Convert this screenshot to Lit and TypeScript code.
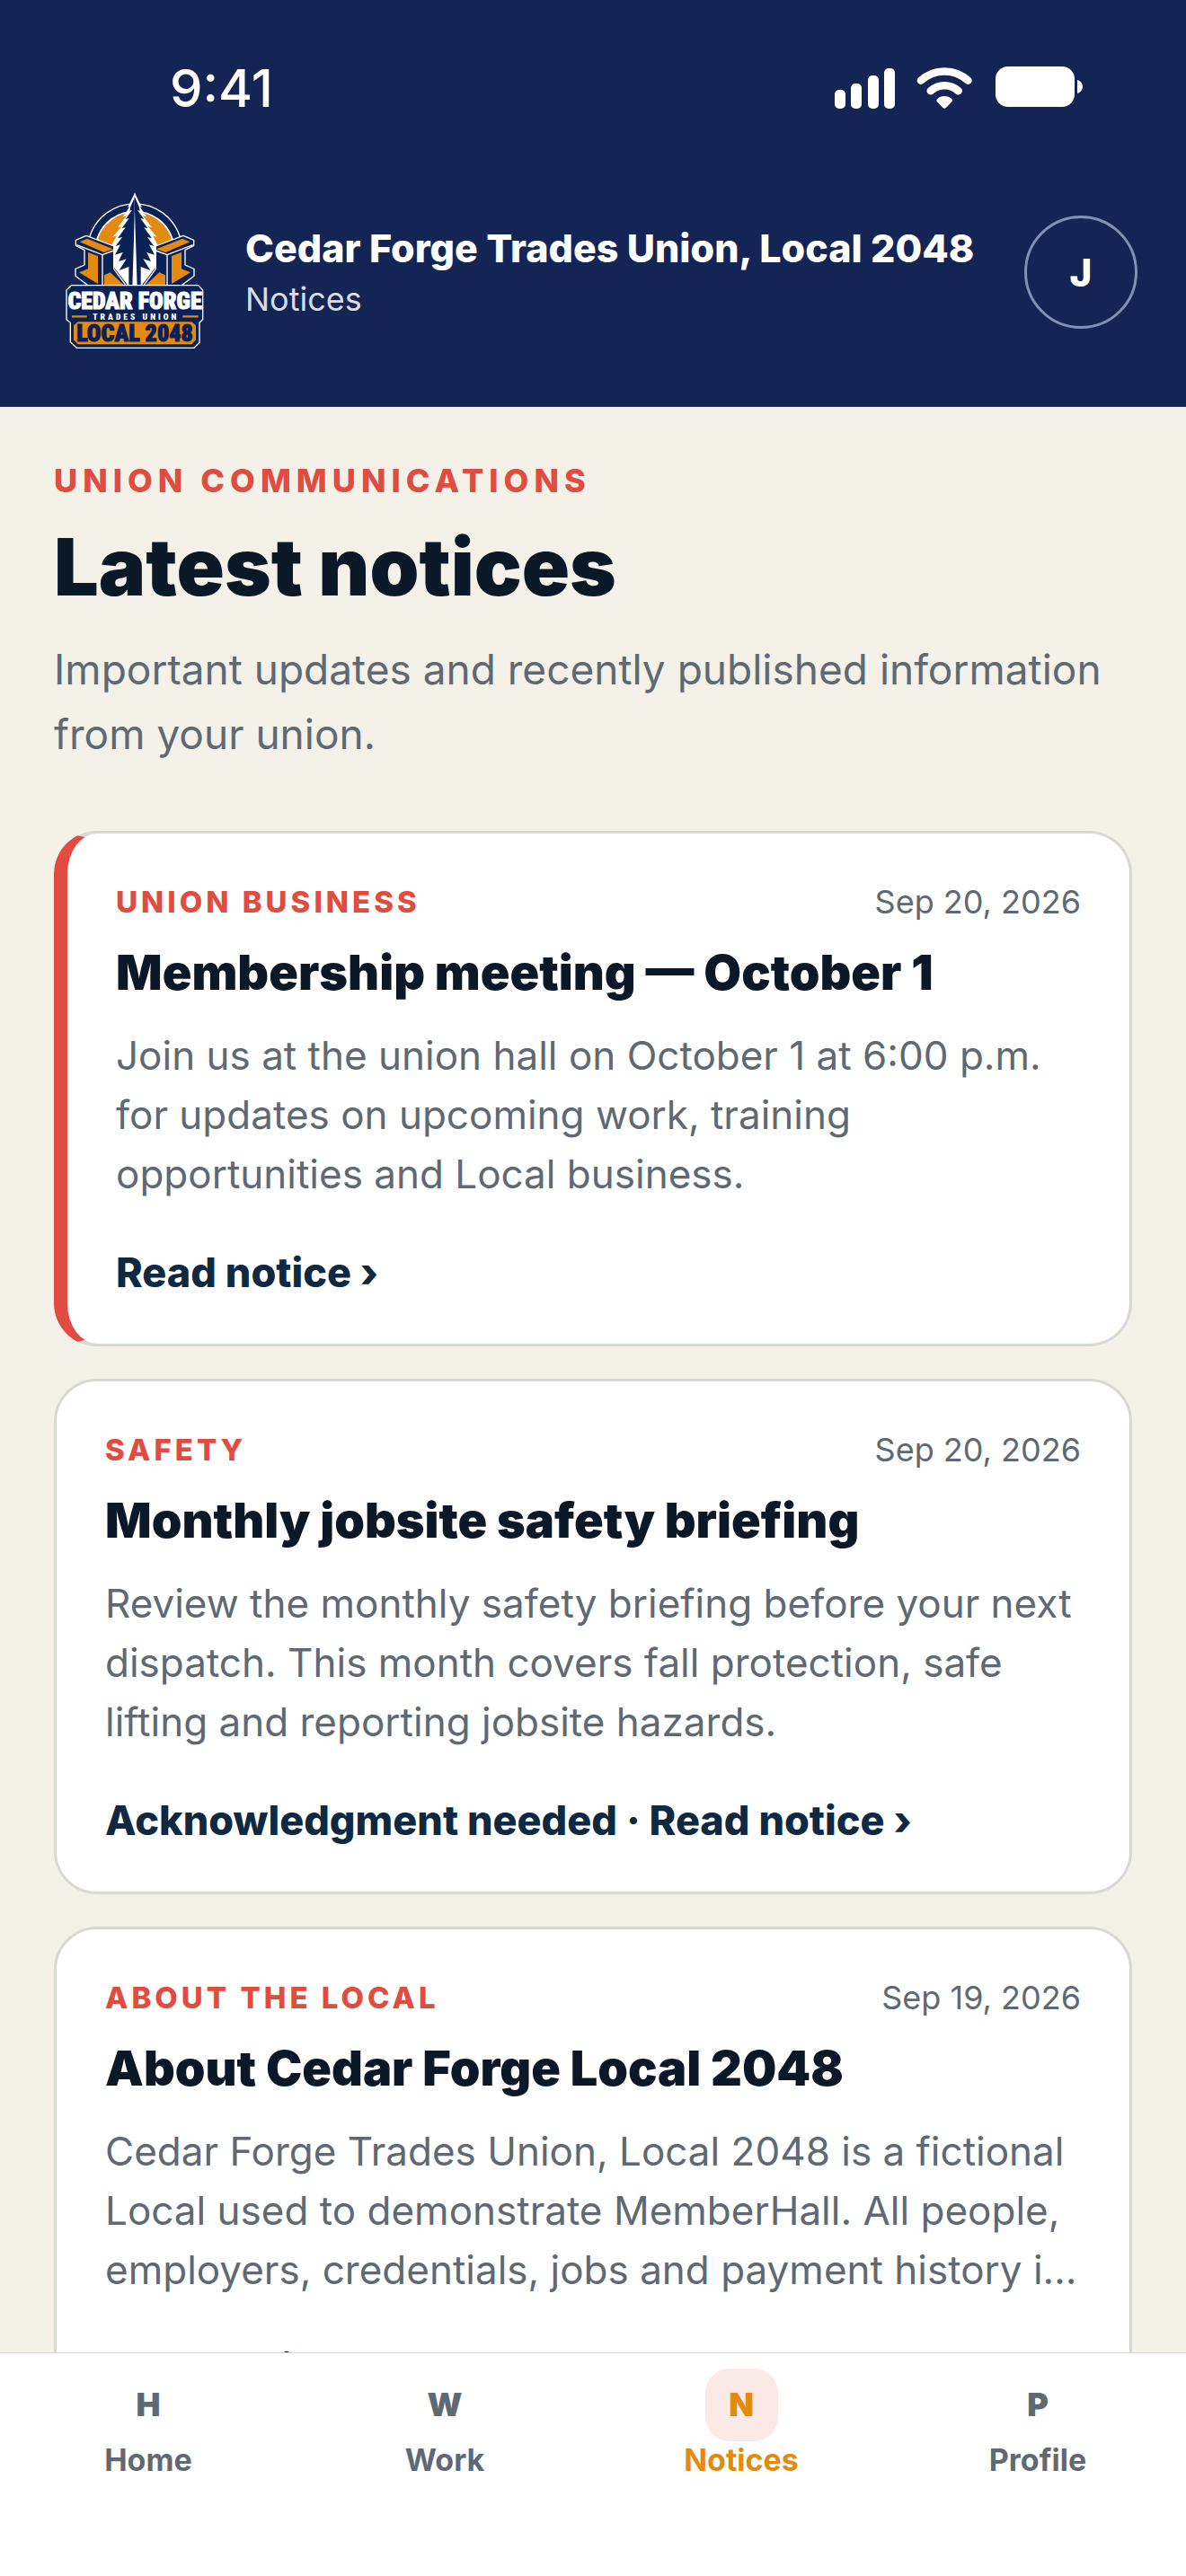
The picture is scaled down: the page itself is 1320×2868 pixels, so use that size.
import { LitElement, html, css, svg } from "lit";
import { customElement, property } from "lit/decorators.js";
import { classMap } from "lit/directives/class-map.js";

interface Notice {
  category: string;
  date: string;
  title: string;
  body: string;
  action: string;
  pinned?: boolean;
}

interface Tab {
  glyph: string;
  label: string;
  active?: boolean;
}

const NOTICES: Notice[] = [
  {
    category: "Union business",
    date: "Sep 20, 2026",
    title: "Membership meeting — October 1",
    body: "Join us at the union hall on October 1 at 6:00 p.m. for updates on upcoming work, training opportunities and Local business.",
    action: "Read notice ›",
    pinned: true,
  },
  {
    category: "Safety",
    date: "Sep 20, 2026",
    title: "Monthly jobsite safety briefing",
    body: "Review the monthly safety briefing before your next dispatch. This month covers fall protection, safe lifting and reporting jobsite hazards.",
    action: "Acknowledgment needed · Read notice ›",
  },
  {
    category: "About the Local",
    date: "Sep 19, 2026",
    title: "About Cedar Forge Local 2048",
    body: "Cedar Forge Trades Union, Local 2048 is a fictional Local used to demonstrate MemberHall. All people, employers, credentials, jobs and payment history in this app are fictional.",
    action: "Read notice ›",
  },
];

const TABS: Tab[] = [
  { glyph: "H", label: "Home" },
  { glyph: "W", label: "Work" },
  { glyph: "N", label: "Notices", active: true },
  { glyph: "P", label: "Profile" },
];

/**
 * Clock, signal, wifi and battery strip.
 */
@customElement("status-bar")
export class StatusBar extends LitElement {
  static styles = css`
    :host {
      align-items: center;
      color: #ffffff;
      display: flex;
      justify-content: space-between;
      padding: 62px 114px 60px 189px;
    }

    .clock {
      font-size: 58px;
      font-weight: 500;
      line-height: 72px;
    }

    .icons {
      display: block;
      height: 48px;
      width: 278px;
    }
  `;

  render() {
    return html`
      <span class="clock">9:41</span>
      <svg class="icons" viewBox="928 74 278 48" fill="#ffffff" aria-hidden="true">
        <rect x="929" y="100" width="12" height="21" rx="5"></rect>
        <rect x="947" y="93" width="12" height="28" rx="5"></rect>
        <rect x="966" y="84" width="12" height="37" rx="5"></rect>
        <rect x="984" y="76" width="12" height="45" rx="5"></rect>
        <g fill="none" stroke="#ffffff" stroke-width="8.6" stroke-linecap="round">
          <path d="M1025 89.700a38.600 38.600 0 0 1 52.400 0"></path>
          <path d="M1035.800 101.200a23 23 0 0 1 30.800 0"></path>
        </g>
        <path d="M1051.200 107c3.200 0 6 1.100 7.900 2.900 1.200 1.200 1.200 2.500.1 3.600l-6.300 6.500c-1 1-2.400 1-3.400 0l-6.300-6.500c-1.100-1.100-1.100-2.400.1-3.600 1.900-1.800 4.700-2.900 7.900-2.900z"></path>
        <rect x="1108" y="74" width="88" height="45" rx="14"></rect>
        <path d="M1199 89c3.800 1.300 6 4.300 6 7.500s-2.200 6.200-6 7.500z"></path>
      </svg>
    `;
  }
}

/**
 * Crest of the local: a cedar between two beams, over the name plates.
 */
@customElement("union-crest")
export class UnionCrest extends LitElement {
  static styles = css`
    :host {
      display: block;
      flex: none;
    }

    .crest {
      display: block;
      height: 200px;
      width: 192px;
    }

    .lettering {
      font-family: "Roboto Condensed", "Liberation Sans Narrow", "Open Sans Condensed", "Roboto", sans-serif;
      font-weight: 900;
      text-anchor: middle;
    }

    .name {
      fill: #ffffff;
      font-size: 78px;
      stroke: #ffffff;
      stroke-width: 3px;
    }

    .trades {
      fill: #ffffff;
      font-size: 29px;
      letter-spacing: 9px;
    }

    .local {
      fill: #0a2156;
      font-size: 78px;
      stroke: #0a2156;
      stroke-width: 3px;
    }
  `;

  // Left half of the artwork; the right half is its mirror image.
  private renderHalf() {
    return svg`
      <path d="M73 202l35-15 92 35v76l44 60H120l-48-36v-24l30-13v-50l-29-15z" fill="#0a2156" stroke="#ffffff" stroke-width="4" stroke-linejoin="round"></path>
      <path d="M86 208l25-11 87 35-31 11z" fill="#e58a10"></path>
      <path d="M114 243l33 12v93l-63-38 30-12z" fill="#e58a10"></path>
      <path d="M168 319l20-9 50 46h-70z" fill="#e58a10"></path>
      <path d="M76 218l86 33v103M162 251l38-14" fill="none" stroke="#ffffff" stroke-width="4"></path>
      <path d="M271 43l-25 50 7-3-22 34 12-3-30 38 13-3-30 36 14-5-16 30 7 10-3 40 4 28 48 62h21z" fill="#ffffff"></path>
      <path d="M271 56l-15 34-3 14 8-2-22 30 12-3-24 34 12-3-26 36 15-4-22 30 16-5-18 34 26-8-14 30 26-8-24 38 32-12v67h21z" fill="#0a2156"></path>
    `;
  }

  render() {
    return html`
      <svg class="crest" viewBox="-18 9 576 600" role="img" aria-label="Crest of the local">
        <path d="M119 192a158 158 0 0 1 302 0l-20 40H139z" fill="#0a2156" stroke="#ffffff" stroke-width="4"></path>
        <path d="M145 196a132 132 0 0 1 250 0l-30 60H175z" fill="#e58a10" stroke="#ffffff" stroke-width="5"></path>
        ${this.renderHalf()}
        <g transform="translate(540 0) scale(-1 1)">${this.renderHalf()}</g>
        <path d="M270 106l8 252h-16z" fill="#ffffff"></path>
        <path d="M58 353h424l15 16v98l-11 11v66l-18 18H76l-21-20v-64l-13-11v-98z" fill="#0a2156" stroke="#ffffff" stroke-width="4"></path>
        <path d="M80 475h380l14 12v48l-14 15H80l-14-15v-48z" fill="#e58a10"></path>
        <path d="M60 457h50M430 457h52" stroke="#e58a10" stroke-width="7"></path>
        <text class="lettering name" x="270" y="432">CEDAR FORGE</text>
        <text class="lettering trades" x="274" y="467">TRADES UNION</text>
        <text class="lettering local" x="270" y="541">LOCAL 2048</text>
      </svg>
    `;
  }
}

/**
 * Card with one union notice.
 */
@customElement("notice-card")
export class NoticeCard extends LitElement {
  @property({ attribute: false })
  notice!: Notice;

  static styles = css`
    :host {
      display: block;
    }

    .card {
      background: #ffffff;
      border: 3px solid #d7d9d3;
      border-radius: 48px;
      padding: 54px 54px 52px;
    }

    .card.is-pinned {
      border-left: 15px solid #e04c40;
    }

    .meta {
      align-items: center;
      display: flex;
      justify-content: space-between;
      line-height: 44px;
    }

    .category {
      color: #e04c40;
      font-size: 33px;
      font-weight: 800;
      letter-spacing: 4px;
      text-transform: uppercase;
    }

    .date {
      color: #5f6973;
      font-size: 36px;
    }

    .title {
      color: #0b1827;
      font-size: 54px;
      font-weight: 900;
      line-height: 66px;
      margin: 24px 0 26px;
    }

    .body {
      -webkit-box-orient: vertical;
      -webkit-line-clamp: 3;
      color: #5f6973;
      display: -webkit-box;
      font-size: 44px;
      line-height: 66px;
      margin: 0;
      overflow: hidden;
    }

    .action {
      color: #0f2942;
      display: block;
      font-size: 45px;
      font-weight: 800;
      line-height: 54px;
      margin-top: 50px;
      text-decoration: none;
    }
  `;

  render() {
    const { category, date, title, body, action, pinned } = this.notice;

    return html`
      <article class=${classMap({ card: true, "is-pinned": !!pinned })}>
        <div class="meta">
          <span class="category">${category}</span>
          <time class="date">${date}</time>
        </div>
        <h2 class="title">${title}</h2>
        <p class="body">${body}</p>
        <a class="action" href="#notice">${action}</a>
      </article>
    `;
  }
}

@customElement("app-root")
export class AppRoot extends LitElement {
  static styles = css`
    :host {
      background: #f4f1e8;
      display: flex;
      flex-direction: column;
      font-family: "Inter", "Liberation Sans", sans-serif;
      height: 100vh;
      overflow: hidden;
    }

    .top {
      background: #142454;
      color: #ffffff;
      flex: none;
    }

    .brand {
      align-items: center;
      display: flex;
      padding: 9px 54px 50px;
    }

    .names {
      flex: 1;
      margin-left: 27px;
      min-width: 0;
    }

    .org {
      font-size: 43px;
      font-weight: 800;
      line-height: 60px;
      margin: 0;
    }

    .section {
      color: #d9dce3;
      font-size: 36px;
      line-height: 54px;
      margin: 0;
    }

    .avatar {
      background: transparent;
      border: 3px solid #8490b3;
      border-radius: 50%;
      color: #ffffff;
      flex: none;
      font: inherit;
      font-size: 42px;
      font-weight: 800;
      height: 126px;
      padding: 0;
      width: 126px;
    }

    .content {
      flex: 1;
      min-height: 0;
      overflow: hidden;
      padding: 60px 60px 0;
    }

    .eyebrow {
      color: #e04c40;
      font-size: 36px;
      font-weight: 800;
      letter-spacing: 6px;
      line-height: 44px;
      margin: 0;
      text-transform: uppercase;
    }

    .heading {
      color: #0b1827;
      font-size: 88px;
      font-weight: 900;
      line-height: 108px;
      margin: 20px 0 24px;
    }

    .lead {
      color: #5f6973;
      font-size: 46px;
      line-height: 72px;
      margin: 0;
    }

    .notices {
      display: grid;
      gap: 36px;
      margin-top: 72px;
    }

    .tabs {
      background: #ffffff;
      border-top: 1px solid #d7d9d3;
      display: grid;
      flex: none;
      grid-template-columns: repeat(4, 1fr);
      padding: 17px 0 108px;
    }

    .tab {
      align-items: center;
      color: #5f6973;
      display: flex;
      flex-direction: column;
      font-size: 34px;
      font-weight: 700;
      line-height: 42px;
      text-decoration: none;
    }

    .glyph {
      border-radius: 27px;
      font-size: 36px;
      font-weight: 900;
      height: 81px;
      line-height: 81px;
      text-align: center;
      width: 81px;
    }

    .tab.is-active {
      color: #e48a0c;
    }

    .tab.is-active .glyph {
      background: #fbe9e6;
    }
  `;

  private renderTab(tab: Tab) {
    return html`
      <a
        class=${classMap({ tab: true, "is-active": !!tab.active })}
        href="#${tab.label.toLowerCase()}"
        aria-current=${tab.active ? "page" : "false"}
      >
        <span class="glyph" aria-hidden="true">${tab.glyph}</span>
        <span>${tab.label}</span>
      </a>
    `;
  }

  render() {
    return html`
      <header class="top">
        <status-bar></status-bar>
        <div class="brand">
          <union-crest></union-crest>
          <div class="names">
            <p class="org">Cedar Forge Trades Union, Local 2048</p>
            <p class="section">Notices</p>
          </div>
          <button class="avatar" type="button" aria-label="Account, J">J</button>
        </div>
      </header>
      <main class="content">
        <p class="eyebrow">Union communications</p>
        <h1 class="heading">Latest notices</h1>
        <p class="lead">Important updates and recently published information from your union.</p>
        <div class="notices">
          ${NOTICES.map((notice) => html`<notice-card .notice=${notice}></notice-card>`)}
        </div>
      </main>
      <nav class="tabs" aria-label="Main">${TABS.map((tab) => this.renderTab(tab))}</nav>
    `;
  }
}

declare global {
  interface HTMLElementTagNameMap {
    "app-root": AppRoot;
    "notice-card": NoticeCard;
    "status-bar": StatusBar;
    "union-crest": UnionCrest;
  }
}
